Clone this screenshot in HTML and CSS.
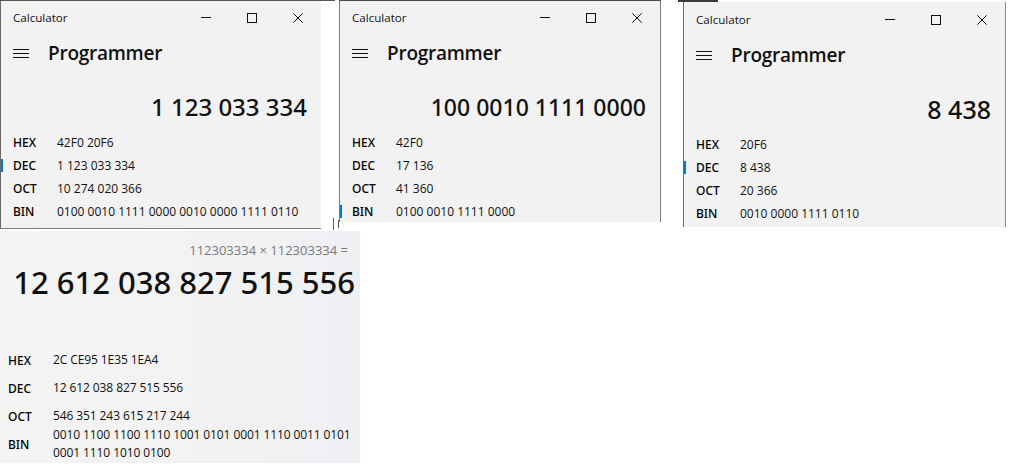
FILE: index.html
```html
<!DOCTYPE html>
<html lang="en">
<head>
<meta charset="utf-8">
<title>Calculator — Programmer</title>
<link rel="stylesheet" href="styles.css">
</head>
<body>
<div class="sheet">
  <div class="top">
    <div class="shot shot-a">
      <section class="win win-a">
        <header class="titlebar">
          <span class="app-name">Calculator</span>
          <div class="ctrls">
            <span class="ctrl"><svg width="10" height="10" viewBox="0 0 10 10"><path d="M0 4.5H10" stroke="#111" stroke-width="1"/></svg></span>
            <span class="ctrl"><svg width="10" height="10" viewBox="0 0 10 10"><rect x="0.5" y="0.5" width="9" height="9" fill="none" stroke="#111" stroke-width="1"/></svg></span>
            <span class="ctrl"><svg width="10" height="10" viewBox="0 0 10 10"><path d="M0.3 0.3L9.7 9.7M9.7 0.3L0.3 9.7" stroke="#111" stroke-width="1"/></svg></span>
          </div>
        </header>
        <div class="header">
          <svg class="burger" width="16" height="9" viewBox="0 0 16 9"><path d="M0 0.5H16M0 4.5H16M0 8.5H16" stroke="#111" stroke-width="1"/></svg>
          <h1 class="mode">Programmer</h1>
        </div>
        <div class="display"><span class="result r-a">1 123 033 334</span></div>
        <ul class="radix">
          <li class="row"><span class="mark"></span><span class="label">HEX</span><span class="value">42F0 20F6</span></li>
          <li class="row active"><span class="mark"></span><span class="label">DEC</span><span class="value">1 123 033 334</span></li>
          <li class="row"><span class="mark"></span><span class="label">OCT</span><span class="value">10 274 020 366</span></li>
          <li class="row"><span class="mark"></span><span class="label">BIN</span><span class="value">0100 0010 1111 0000 0010 0000 1111 0110</span></li>
        </ul>
      </section>
    </div>

    <div class="shot shot-b">
      <section class="win win-b">
        <header class="titlebar">
          <span class="app-name">Calculator</span>
          <div class="ctrls">
            <span class="ctrl"><svg width="10" height="10" viewBox="0 0 10 10"><path d="M0 4.5H10" stroke="#111" stroke-width="1"/></svg></span>
            <span class="ctrl"><svg width="10" height="10" viewBox="0 0 10 10"><rect x="0.5" y="0.5" width="9" height="9" fill="none" stroke="#111" stroke-width="1"/></svg></span>
            <span class="ctrl"><svg width="10" height="10" viewBox="0 0 10 10"><path d="M0.3 0.3L9.7 9.7M9.7 0.3L0.3 9.7" stroke="#111" stroke-width="1"/></svg></span>
          </div>
        </header>
        <div class="header">
          <svg class="burger" width="16" height="9" viewBox="0 0 16 9"><path d="M0 0.5H16M0 4.5H16M0 8.5H16" stroke="#111" stroke-width="1"/></svg>
          <h1 class="mode">Programmer</h1>
        </div>
        <div class="display"><span class="result r-b">100 0010 1111 0000</span></div>
        <ul class="radix">
          <li class="row"><span class="mark"></span><span class="label">HEX</span><span class="value">42F0</span></li>
          <li class="row"><span class="mark"></span><span class="label">DEC</span><span class="value">17 136</span></li>
          <li class="row"><span class="mark"></span><span class="label">OCT</span><span class="value">41 360</span></li>
          <li class="row active"><span class="mark"></span><span class="label">BIN</span><span class="value">0100 0010 1111 0000</span></li>
        </ul>
      </section>
    </div>

    <div class="shot shot-c">
      <section class="win win-c">
        <header class="titlebar">
          <span class="app-name">Calculator</span>
          <div class="ctrls">
            <span class="ctrl"><svg width="10" height="10" viewBox="0 0 10 10"><path d="M0 4.5H10" stroke="#111" stroke-width="1"/></svg></span>
            <span class="ctrl"><svg width="10" height="10" viewBox="0 0 10 10"><rect x="0.5" y="0.5" width="9" height="9" fill="none" stroke="#111" stroke-width="1"/></svg></span>
            <span class="ctrl"><svg width="10" height="10" viewBox="0 0 10 10"><path d="M0.3 0.3L9.7 9.7M9.7 0.3L0.3 9.7" stroke="#111" stroke-width="1"/></svg></span>
          </div>
        </header>
        <div class="header">
          <svg class="burger" width="16" height="9" viewBox="0 0 16 9"><path d="M0 0.5H16M0 4.5H16M0 8.5H16" stroke="#111" stroke-width="1"/></svg>
          <h1 class="mode">Programmer</h1>
        </div>
        <div class="display"><span class="result r-c">8 438</span></div>
        <ul class="radix">
          <li class="row"><span class="mark"></span><span class="label">HEX</span><span class="value">20F6</span></li>
          <li class="row active"><span class="mark"></span><span class="label">DEC</span><span class="value">8 438</span></li>
          <li class="row"><span class="mark"></span><span class="label">OCT</span><span class="value">20 366</span></li>
          <li class="row"><span class="mark"></span><span class="label">BIN</span><span class="value">0010 0000 1111 0110</span></li>
        </ul>
      </section>
    </div>
  </div>

  <section class="wide">
    <div class="expr">112303334 × 112303334 =</div>
    <div class="big">12 612 038 827 515 556</div>
    <ul class="radix wide-radix">
      <li class="row"><span class="label">HEX</span><span class="value">2C CE95 1E35 1EA4</span></li>
      <li class="row"><span class="label">DEC</span><span class="value">12 612 038 827 515 556</span></li>
      <li class="row"><span class="label">OCT</span><span class="value">546 351 243 615 217 244</span></li>
      <li class="row"><span class="label">BIN</span><span class="value">0010 1100 1100 1110 1001 0101 0001 1110 0011 0101 0001 1110 1010 0100</span></li>
    </ul>
  </section>
</div>
</body>
</html>
```

FILE: styles.css
```css
* { box-sizing: border-box; }
html, body { margin: 0; padding: 0; }
body {
  background: #ffffff;
  font-family: "Open Sans", "Noto Sans", "Liberation Sans", sans-serif;
  color: #000;
  width: 1013px;
  height: 470px;
  overflow: hidden;
}
.sheet { width: 1013px; }

.top {
  display: flex;
  align-items: flex-start;
  height: 231px;
}
.shot { position: relative; flex: none; }

.shot-a {
  width: 335px;
  height: 230px;
  margin-right: 4px;
  border-top: 1px solid #555;
}
.shot-a::after {
  content: "";
  position: absolute;
  left: 333px;
  top: 217px;
  width: 1px;
  height: 12px;
  background: #666;
}
.shot-b {
  width: 322px;
  height: 222px;
  border-top: 1px solid #4a4a4a;
}
.shot-b::after {
  content: "";
  position: absolute;
  left: -1px;
  top: 219px;
  width: 1px;
  height: 8px;
  background: #555;
}
.shot-c {
  width: 335px;
  height: 228px;
  margin-left: 17px;
}
.shot-c::before {
  content: "";
  position: absolute;
  left: 0;
  top: 0;
  width: 40px;
  height: 2px;
  background: #3a3a3a;
}

.win {
  background: #f2f2f2;
  overflow: hidden;
}
.win-a {
  width: 321px;
  height: 228px;
  border-left: 1px solid #6a6a6a;
  border-bottom: 1px solid #7a7a7a;
}
.win-b {
  width: 322px;
  height: 221px;
  border-left: 1px solid #7a7a7a;
  border-right: 1px solid #7a7a7a;
}
.win-c {
  width: 323px;
  height: 225px;
  margin-left: 5px;
  margin-top: 2px;
  padding-top: 1px;
  border-left: 1px solid #6a6a6a;
  border-right: 1px solid #8a8a8a;
}

.titlebar {
  display: flex;
  align-items: center;
  height: 33px;
  padding-left: 12px;
}
.app-name {
  flex: 1;
  font-size: 11.6px;
  color: #111;
}
.ctrls { display: flex; }
.ctrl {
  width: 46px;
  height: 33px;
  display: flex;
  align-items: center;
  justify-content: center;
}
.ctrl svg { display: block; }

.header {
  display: flex;
  align-items: center;
  height: 39px;
  padding-left: 12px;
  gap: 19px;
}
.burger { display: block; }
.mode {
  margin: 0;
  font-size: 19px;
  font-weight: 600;
  letter-spacing: -0.25px;
  line-height: 1;
  color: #111;
}

.display {
  height: 58px;
  padding-top: 10px;
  padding-right: 14px;
  display: flex;
  align-items: center;
  justify-content: flex-end;
}
.result {
  font-family: "Noto Sans", "Open Sans", sans-serif;
  font-weight: 500;
  line-height: 1;
  white-space: nowrap;
  color: #111;
}
.r-a { font-size: 24px; }
.r-b { font-size: 23px; }
.r-c { font-size: 25px; }

.radix {
  list-style: none;
  margin: 0;
  padding: 0;
}
.row {
  display: flex;
  align-items: center;
  height: 23px;
  font-size: 12px;
  color: #000;
}
.mark {
  width: 3px;
  height: 13px;
  margin-left: -1px;
  margin-right: 10px;
  flex: none;
}
.row.active .mark { background: #0078d7; }
.label {
  width: 44px;
  flex: none;
  font-family: "Noto Sans", "Open Sans", sans-serif;
  font-weight: 500;
}
.value {
  white-space: nowrap;
  color: #111;
}

.wide {
  width: 360px;
  height: 232px;
  background: linear-gradient(90deg, #f4f4f4 0%, #f2f2f3 60%, #eef0f3 100%);
}
.expr {
  height: 38px;
  display: flex;
  align-items: center;
  justify-content: flex-end;
  padding-right: 12px;
  font-size: 13px;
  color: #7a7a7a;
}
.big {
  height: 27px;
  display: flex;
  align-items: center;
  justify-content: flex-end;
  padding-right: 5px;
  font-family: "Noto Sans", "Open Sans", sans-serif;
  font-size: 31px;
  font-weight: 500;
  line-height: 27px;
  white-space: nowrap;
  color: #111;
}
.wide-radix { margin-top: 50px; }
.wide-radix .row {
  height: 28px;
  padding-left: 8px;
}
.wide-radix .label { width: 45px; }
.wide-radix .value {
  white-space: normal;
  line-height: 18px;
  flex: 1;
  padding-right: 0;
  letter-spacing: -0.1px;
}
```
